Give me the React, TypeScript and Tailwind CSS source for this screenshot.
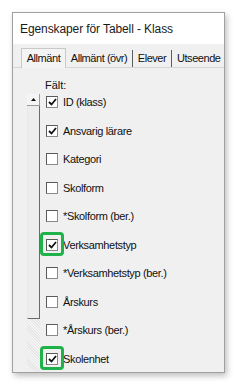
const items: { label: string; checked: boolean; mark?: boolean }[] = [
  { label: "ID (klass)", checked: true },
  { label: "Ansvarig lärare", checked: true },
  { label: "Kategori", checked: false },
  { label: "Skolform", checked: false },
  { label: "*Skolform (ber.)", checked: false },
  { label: "Verksamhetstyp", checked: true, mark: true },
  { label: "*Verksamhetstyp (ber.)", checked: false },
  { label: "Årskurs", checked: false },
  { label: "*Årskurs (ber.)", checked: false },
  { label: "Skolenhet", checked: true, mark: true },
];

function CheckBox({ checked }: { checked: boolean }) {
  return (
    <div className="w-[12px] h-[12px] bg-white border border-[#5a5a5a] border-r-[#8a8a8a] border-b-[#8a8a8a] flex items-center justify-center">
      {checked && (
        <svg width="9" height="8" viewBox="0 0 9 8">
          <path d="M1 4 L3.5 6.5 L8 1" fill="none" stroke="#111" strokeWidth="1.8" />
        </svg>
      )}
    </div>
  );
}

export default function App() {
  return (
    <div
      className="w-[240px] h-[385px] bg-white pt-[12px] pl-[12px] overflow-hidden"
      style={{ fontFamily: '"Liberation Sans", Arial, sans-serif' }}
    >
      <div className="w-[213px] h-[361px] border border-[#a0a0a0] shadow-[2px_3px_6px_rgba(0,0,0,0.25)] flex flex-col overflow-hidden bg-[#f0f0f0]">
        <div className="h-[31px] shrink-0 bg-white flex items-center pl-[7px] text-[12px] tracking-[-0.1px] text-[#1a1a1a]">
          Egenskaper för Tabell - Klass
        </div>

        <div className="flex-1 flex flex-col">
          <div className="mt-[4px] pl-[8px] flex items-end h-[20px] text-[11px] tracking-[-0.45px] text-[#111] border-b border-[#d6d6d6] whitespace-nowrap">
            <div className="h-[20px] w-[45px] bg-[#f4f4f4] border border-b-0 border-[#c9c9c9] flex items-center justify-center -mb-px">
              Allmänt
            </div>
            <div className="h-[17px] w-[67px] flex items-center justify-center border-r border-[#5c5c5c]">Allmänt (övr)</div>
            <div className="h-[17px] w-[39px] flex items-center justify-center border-r border-[#5c5c5c]">Elever</div>
            <div className="h-[17px] pl-[5px] flex items-center">Utseende</div>
          </div>

          <div className="pl-[32px] mt-[10px] text-[11px] text-[#111] leading-[14px]">Fält:</div>

          <div className="flex mt-[-4px]">
            <div className="ml-[14px] w-[13px] mt-[6px] flex flex-col shrink-0">
              <div className="h-[12px] bg-[#f5f5f5] border-r border-b border-[#9a9a9a] flex items-center justify-center">
                <svg width="5" height="3" viewBox="0 0 5 3">
                  <path d="M0 3 L2.5 0 L5 3 Z" fill="#111" />
                </svg>
              </div>
              <div className="h-[213px] bg-[#ededed] border-l border-[#e8e8e8] border-r border-b border-r-[#6a6a6a] border-b-[#6a6a6a]" />
              <div className="flex-1 bg-[repeating-linear-gradient(45deg,#f4f4f4_0px,#f4f4f4_1px,#e6e6e6_1px,#e6e6e6_2px)] h-[60px]" />
            </div>

            <div className="pl-[6px] flex flex-col">
              {items.map((it) => (
                <div key={it.label} className="h-[28.5px] flex items-center">
                  <div className="relative">
                    <CheckBox checked={it.checked} />
                    {it.mark && (
                      <div className="absolute -left-[6px] -right-[6px] -top-[7px] -bottom-[5px] border-[3px] border-[#1fb14a] rounded-[4px]" />
                    )}
                  </div>
                  <span className="ml-[5px] text-[11px] tracking-[-0.35px] text-[#111] whitespace-nowrap">{it.label}</span>
                </div>
              ))}
            </div>
          </div>
        </div>
      </div>
    </div>
  );
}
